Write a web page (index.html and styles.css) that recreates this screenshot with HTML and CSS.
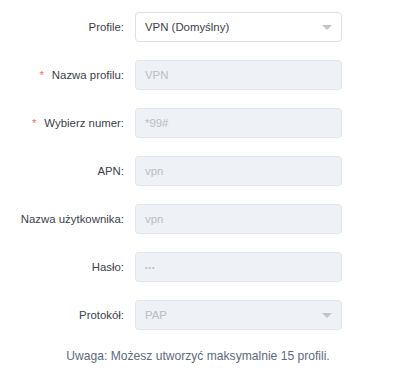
FILE: index.html
```html
<!DOCTYPE html>
<html lang="pl">
<head>
  <meta charset="UTF-8">
  <meta name="viewport" content="width=device-width, initial-scale=1.0">
  <title>Profil APN</title>
  <link rel="stylesheet" href="styles.css">
</head>
<body>
  <form class="profile-form">
    <div class="form-row">
      <label class="form-label">Profile:</label>
      <div class="field select">
        <span class="value">VPN (Domyślny)</span>
        <span class="arrow"></span>
      </div>
    </div>

    <div class="form-row">
      <label class="form-label required">Nazwa profilu:</label>
      <div class="field disabled"><span class="value">VPN</span></div>
    </div>

    <div class="form-row">
      <label class="form-label required">Wybierz numer:</label>
      <div class="field disabled"><span class="value">*99#</span></div>
    </div>

    <div class="form-row">
      <label class="form-label">APN:</label>
      <div class="field disabled"><span class="value">vpn</span></div>
    </div>

    <div class="form-row">
      <label class="form-label">Nazwa użytkownika:</label>
      <div class="field disabled"><span class="value">vpn</span></div>
    </div>

    <div class="form-row">
      <label class="form-label">Hasło:</label>
      <div class="field disabled"><span class="value dots">•••</span></div>
    </div>

    <div class="form-row">
      <label class="form-label">Protokół:</label>
      <div class="field select disabled">
        <span class="value">PAP</span>
        <span class="arrow"></span>
      </div>
    </div>

    <p class="note">Uwaga: Możesz utworzyć maksymalnie 15 profili.</p>
  </form>
</body>
</html>
```

FILE: styles.css
```css
/* Form layout */
body {
  margin: 0;
  font-family: "Liberation Sans", Arial, sans-serif;
  background: #ffffff;
}

.profile-form {
  width: 400px;
  padding-top: 12px;
}

.form-row {
  display: grid;
  grid-template-columns: 124px 207px;
  column-gap: 11px;
  align-items: center;
  height: 30px;
  margin-bottom: 18px;
}

.form-label {
  text-align: right;
  font-size: 11.4px;
  color: #3a414c;
}

.form-label.required::before {
  content: "*";
  color: #f56c6c;
  margin-right: 8px;
}

.field {
  box-sizing: border-box;
  height: 30px;
  border: 1px solid #dcdfe6;
  border-radius: 4px;
  background: #ffffff;
  display: flex;
  align-items: center;
  justify-content: space-between;
  padding: 0 9px;
  font-size: 11.4px;
  color: #3a414c;
}

.field.disabled {
  background: #eef1f6;
  border-color: #e1e5ec;
  color: #b9bdc4;
}

.field .dots {
  font-size: 7px;
  letter-spacing: 1px;
}

.arrow {
  width: 0;
  height: 0;
  border-left: 5px solid transparent;
  border-right: 5px solid transparent;
  border-top: 5px solid #c0c4cc;
}

.note {
  margin: 19px 0 0;
  text-align: center;
  font-size: 12.1px;
  color: #5b6a80;
  padding-right: 4px;
}
```
